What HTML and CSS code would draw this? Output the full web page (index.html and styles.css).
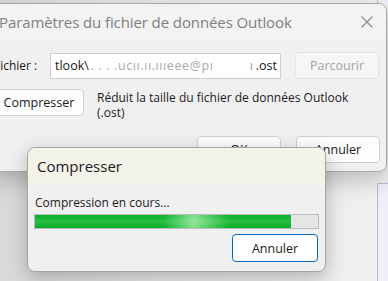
FILE: index.html
```html
<!DOCTYPE html>
<html lang="fr">
<head>
  <meta charset="UTF-8">
  <meta name="viewport" content="width=device-width, initial-scale=1.0">
  <title>Paramètres du fichier de données Outlook</title>
  <link rel="stylesheet" href="styles.css">
</head>
<body>
  <div class="back-win back-top"></div>
  <div class="back-win back-bottom"></div>

  <div class="dialog">
    <div class="titlebar">
      <span class="title">Paramètres du fichier de données Outlook</span>
      <svg class="close" width="12" height="12" viewBox="0 0 12 12">
        <path d="M0.5 0.5 L11.5 11.5 M11.5 0.5 L0.5 11.5" stroke="#8a8a8a" stroke-width="1.1" fill="none"/>
      </svg>
    </div>
    <div class="content">
      <div class="row">
        <label class="field-label" for="path">Fichier :</label>
        <div class="path-box" id="path">
          <span>tlook\</span>
          <span class="blur">. . . .ucıı.ıı.ıııeee@pı</span>
          <span class="mask"></span>
          <span class="blur-end">ı</span>
          <span>.ost</span>
        </div>
        <button class="btn btn-disabled" disabled>Parcourir</button>
      </div>
      <div class="row row-compress">
        <button class="btn btn-compress">Compresser</button>
        <p class="desc">Réduit la taille du fichier de données Outlook (.ost)</p>
      </div>
      <div class="row row-actions">
        <button class="btn">OK</button>
        <button class="btn">Annuler</button>
      </div>
    </div>
  </div>

  <div class="progress-dialog">
    <div class="progress-title">Compresser</div>
    <div class="progress-body">
      <p class="status">Compression en cours...</p>
      <div class="bar"><div class="bar-fill" style="width: 90.5%"></div></div>
      <div class="progress-actions">
        <button class="btn btn-default">Annuler</button>
      </div>
    </div>
  </div>
</body>
</html>
```

FILE: styles.css
```css
/* General Styles */
body {
  font-family: "Open Sans", "Noto Sans", sans-serif;
  font-size: 12px;
  color: #1b1b1b;
  background: linear-gradient(90deg, #d9d9d9 0%, #e8e8e8 40%, #f0f0f0 100%);
  margin: 0;
  width: 388px;
  height: 281px;
  overflow: hidden;
  position: relative;
}

/* windows lying behind */
.back-win {
  position: absolute;
  background-color: #efeff8;
  border-left: 1px solid #b9b9dd;
}

.back-top {
  left: 377px;
  top: 0;
  width: 11px;
  height: 5px;
}

.back-bottom {
  left: 377px;
  top: 183px;
  width: 11px;
  height: 98px;
  border-top: 1px solid #b9b9dd;
}

/* main dialog */
.dialog {
  position: relative;
  margin: 3px 0 0 -11px;
  width: 396px;
  height: 167px;
  background-color: #f0f0f0;
  border: 1px solid #a8a8a8;
  border-radius: 8px;
  box-shadow: 0 8px 22px rgba(0, 0, 0, 0.22);
  overflow: hidden;
}

.titlebar {
  height: 36px;
  background-color: #f3f3f3;
  display: flex;
  align-items: center;
  justify-content: space-between;
  padding: 0 13px 0 9px;
}

.title {
  font-size: 15px;
  letter-spacing: -0.1px;
  color: #7f7f7f;
}

.close {
  display: block;
}

.content {
  padding: 12px 6px 0 4px;
}

.row {
  display: flex;
  align-items: center;
}

.field-label {
  width: 56px;
  flex: none;
}

.path-box {
  width: 231px;
  height: 26px;
  box-sizing: border-box;
  background-color: #fff;
  border: 1px solid #cfcfcf;
  padding: 0 3px 0 4px;
  display: flex;
  align-items: center;
  white-space: nowrap;
  overflow: hidden;
  font-size: 12.5px;
}

.blur {
  flex: 1;
  color: #a8a8a8;
  letter-spacing: 0.6px;
  margin-left: 2px;
}

.mask {
  flex: none;
  width: 34px;
  height: 10px;
  background-color: #fff;
}

.blur-end {
  color: #9a9a9a;
  margin-right: 3px;
}

.btn {
  font-family: inherit;
  font-size: 12.5px;
  color: #1b1b1b;
  height: 27px;
  width: 84px;
  background-color: #fdfdfd;
  border: 1px solid #d0d0d0;
  border-radius: 4px;
  padding: 0;
  flex: none;
}

.btn-disabled {
  margin-left: 14px;
  color: #a3a3a3;
  background-color: #f6f6f6;
  border-color: #e3e3e3;
}

.row-compress {
  margin-top: 10px;
  align-items: flex-start;
}

.btn-compress {
  width: 90px;
}

.desc {
  margin: 0 0 0 13px;
  width: 270px;
  line-height: 15px;
  padding-top: 1px;
}

.row-actions {
  margin-top: 16px;
  justify-content: flex-end;
  gap: 15px;
}

/* progress window */
.progress-dialog {
  position: absolute;
  left: 27px;
  top: 147px;
  width: 297px;
  height: 123px;
  background-color: #f0f0f0;
  border: 1px solid #a5a5a5;
  border-radius: 8px;
  box-shadow: 0 6px 20px rgba(0, 0, 0, 0.25);
  overflow: hidden;
}

.progress-title {
  height: 36px;
  background-color: #f3f3ea;
  display: flex;
  align-items: center;
  padding-left: 9px;
  font-size: 15px;
  color: #1b1b1b;
}

.progress-body {
  padding: 0 6px 0 6px;
}

.status {
  margin: 11px 0 0 1px;
  line-height: 16px;
}

.bar {
  margin-top: 3px;
  height: 15px;
  box-sizing: border-box;
  background-color: #e6e6e6;
  border: 1px solid #bcbcbc;
}

.bar-fill {
  height: 100%;
  background:
    linear-gradient(180deg, rgba(255, 255, 255, 0) 0%, rgba(255, 255, 255, 0.15) 50%, rgba(255, 255, 255, 0) 100%),
    linear-gradient(90deg, #06b025 0%, #06b025 50%, #7ee28a 62%, #06b025 76%, #06b025 100%);
}

.progress-actions {
  display: flex;
  justify-content: flex-end;
  margin-top: 5px;
  padding-right: 1px;
}

.btn-default {
  width: 86px;
  height: 28px;
  background-color: #fff;
  border-color: #0067c0;
}
```
